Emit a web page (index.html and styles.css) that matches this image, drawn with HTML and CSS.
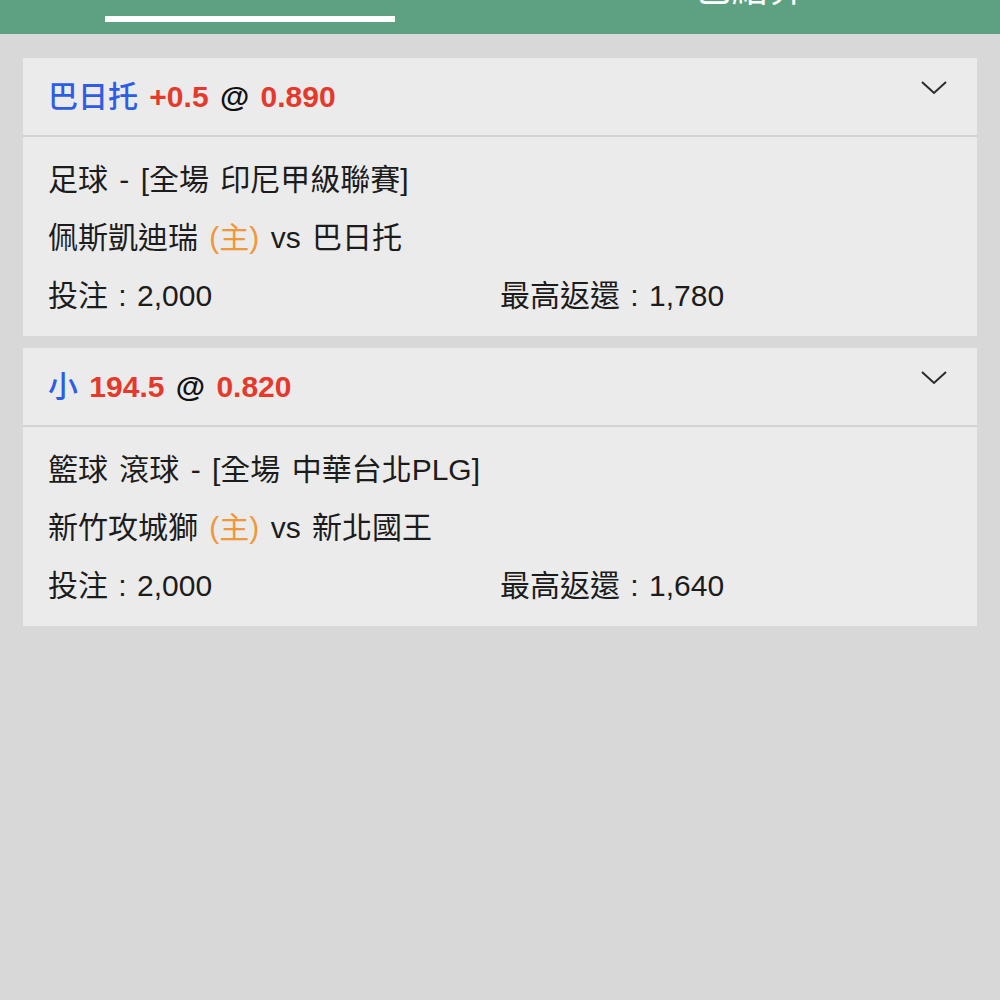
FILE: index.html
```html
<!DOCTYPE html>
<html lang="zh-Hant">
<head>
  <meta charset="UTF-8" />
  <meta name="viewport" content="width=device-width, initial-scale=1" />
  <title>注單</title>
  <link rel="stylesheet" href="styles.css">
</head>
<body>
  <div class="tabs">
    <div class="tab active">
      <span class="tab-label">未結算</span>
      <span class="tab-bar"></span>
    </div>
    <div class="tab">
      <span class="tab-label">已結算</span>
    </div>
  </div>

  <div class="bets">
    <div class="bet">
      <div class="bet-head">
        <div class="pick">
          <span class="team">巴日托</span>
          <span class="num">+0.5</span>
          <span class="at">@</span>
          <span class="num">0.890</span>
        </div>
        <svg class="chevron" width="28" height="16" viewBox="0 0 28 16">
          <path d="M2 2 L14 13 L26 2" fill="none" stroke="#2a2a2a" stroke-width="2" />
        </svg>
      </div>
      <div class="bet-body">
        <div class="line">足球 - [全場 印尼甲級聯賽]</div>
        <div class="line">佩斯凱迪瑞 <span class="home">(主)</span> vs 巴日托</div>
        <div class="line cols">
          <span>投注 : 2,000</span>
          <span>最高返還 : 1,780</span>
        </div>
      </div>
    </div>

    <div class="bet">
      <div class="bet-head">
        <div class="pick">
          <span class="team">小</span>
          <span class="num">194.5</span>
          <span class="at">@</span>
          <span class="num">0.820</span>
        </div>
        <svg class="chevron" width="28" height="16" viewBox="0 0 28 16">
          <path d="M2 2 L14 13 L26 2" fill="none" stroke="#2a2a2a" stroke-width="2" />
        </svg>
      </div>
      <div class="bet-body">
        <div class="line">籃球 滾球 - [全場 中華台北PLG]</div>
        <div class="line">新竹攻城獅 <span class="home">(主)</span> vs 新北國王</div>
        <div class="line cols">
          <span>投注 : 2,000</span>
          <span>最高返還 : 1,640</span>
        </div>
      </div>
    </div>
  </div>
</body>
</html>
```

FILE: styles.css
```css
body {
  margin: 0;
  background: #d8d8d8;
  font-family: "Liberation Sans", "Noto Sans CJK TC", sans-serif;
  color: #1c1c1c;
  height: 100vh;
}
.tabs {
  display: flex;
  align-items: flex-end;
  height: 34px;
  overflow: hidden;
  background: #5ea182;
}
.tab {
  flex: 1;
  display: flex;
  flex-direction: column;
  align-items: center;
}
.tab-label {
  color: #fff;
  font-size: 37px;
  line-height: 37px;
  padding-bottom: 26px;
}
.tab.active .tab-label {
  padding-bottom: 0;
  margin-bottom: 22px;
}
.tab-bar {
  display: block;
  width: 290px;
  height: 6px;
  margin-bottom: 12px;
  background: #fff;
}
.bets {
  display: flex;
  flex-direction: column;
  gap: 12px;
  padding: 24px 23px;
}
.bet {
  background: #ebebeb;
}
.bet-head {
  display: flex;
  justify-content: space-between;
  align-items: flex-start;
  height: 77px;
  padding: 0 29px 0 25px;
  border-bottom: 2px solid #d3d3d3;
}
.pick {
  font-size: 30px;
  line-height: 77px;
  font-weight: 700;
  word-spacing: 3px;
}
.team {
  color: #2d5de6;
  font-weight: 500;
}
.num {
  color: #e5392c;
}
.at {
  color: #111;
}
.chevron {
  margin-top: 22px;
}
.bet-body {
  padding: 14px 25px 11px;
}
.line {
  font-size: 30px;
  line-height: 58px;
  white-space: nowrap;
  word-spacing: 3px;
}
.home {
  color: #f0973b;
}
.cols {
  display: grid;
  grid-template-columns: 1fr 1fr;
  word-spacing: 2px;
}
```
